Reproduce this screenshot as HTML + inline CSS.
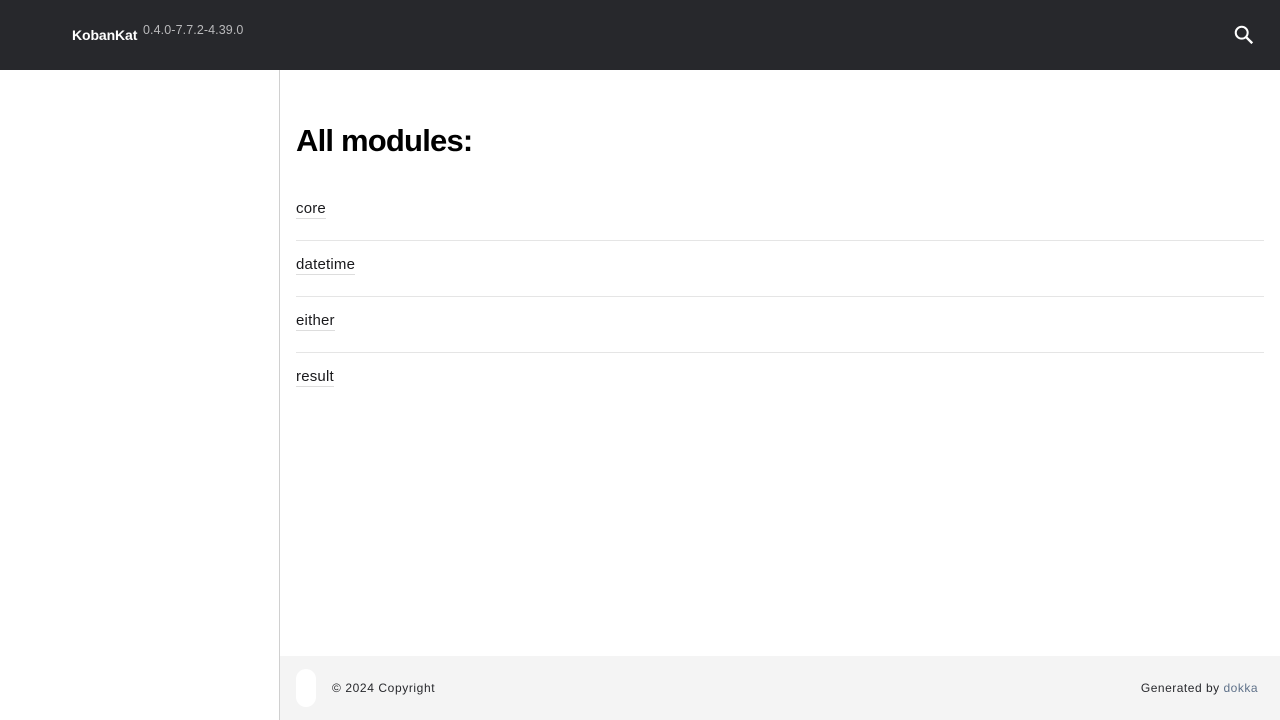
<!DOCTYPE html>
<html><head><style>
*{margin:0;padding:0;box-sizing:border-box}
body{width:1280px;height:720px;overflow:hidden;background:#fff;font-family:"Liberation Sans",sans-serif;position:relative}
.hdr{position:absolute;left:0;top:0;width:1280px;height:70px;background:#27282c}
.name{position:absolute;left:72px;top:27px;color:#fff;font-size:14px;font-weight:bold;letter-spacing:-0.1px}
.ver{position:absolute;left:143px;top:23px;color:#b9b9bb;font-size:12.5px;letter-spacing:0.1px}
.side{position:absolute;left:0;top:70px;width:280px;height:650px;border-right:1px solid #d0d0d0}
h1{position:absolute;left:296px;top:123px;font-size:31px;font-weight:bold;color:#000;letter-spacing:-0.8px}
.row{position:absolute;left:296px;width:968px;height:56px}
.row a{position:absolute;top:7px;font-size:15px;color:#19191c;text-decoration:none;border-bottom:1px solid #ddd;padding-bottom:1px;letter-spacing:0.2px}
.sep{position:absolute;left:296px;width:968px;height:1px;background:#e5e5e5}
.foot{position:absolute;left:280px;top:656px;width:1000px;height:64px;background:#f4f4f4}
.pill{position:absolute;left:16px;top:13px;width:20px;height:38px;background:#fff;border-radius:10px}
.copy{position:absolute;left:52px;top:25px;font-size:12px;color:#27282c;letter-spacing:0.6px}
.gen{position:absolute;right:22px;top:25px;font-size:12px;color:#27282c;letter-spacing:0.5px}
.gen span{color:#5f7189}
</style></head><body>
<div class="hdr">
<div class="name">KobanKat</div><div class="ver">0.4.0-7.7.2-4.39.0</div>
<svg style="position:absolute;left:1233px;top:24px" width="22" height="22" viewBox="0 0 24 24"><circle cx="9.5" cy="9.5" r="6.5" fill="none" stroke="#fff" stroke-width="2.2"/><path d="M14 14l7 7" stroke="#fff" stroke-width="2.6"/></svg>
</div>
<div class="side"></div>
<h1>All modules:</h1>
<div class="row" style="top:193px"><a>core</a></div>
<div class="sep" style="top:240px"></div>
<div class="row" style="top:249px"><a>datetime</a></div>
<div class="sep" style="top:296px"></div>
<div class="row" style="top:305px"><a>either</a></div>
<div class="sep" style="top:352px"></div>
<div class="row" style="top:361px"><a>result</a></div>
<div class="foot"><div class="pill"></div><div class="copy">© 2024 Copyright</div><div class="gen">Generated by <span>dokka</span></div></div>
</body></html>
